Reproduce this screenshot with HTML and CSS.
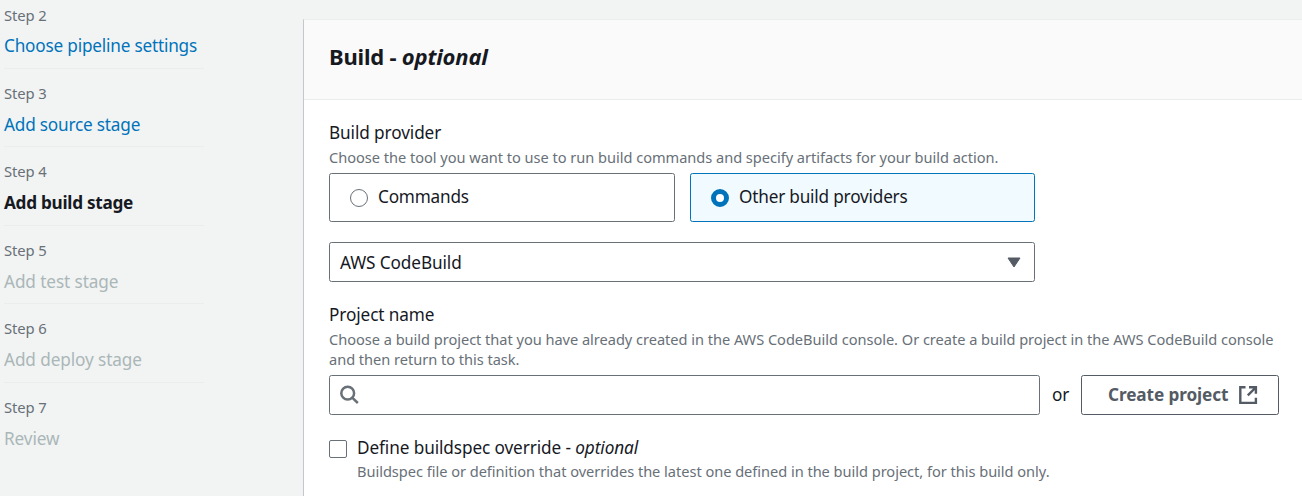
FILE: index.html
```html
<!DOCTYPE html>
<html lang="en">
<head>
<meta charset="utf-8">
<title>Add build stage</title>
<link rel="stylesheet" href="styles.css">
</head>
<body>
<div class="layout">
  <nav class="steps">
    <div class="step"><span class="step-label">Step 2</span><a class="step-title link">Choose pipeline settings</a></div>
    <div class="step"><span class="step-label">Step 3</span><a class="step-title link">Add source stage</a></div>
    <div class="step"><span class="step-label">Step 4</span><span class="step-title active">Add build stage</span></div>
    <div class="step"><span class="step-label">Step 5</span><span class="step-title">Add test stage</span></div>
    <div class="step"><span class="step-label">Step 6</span><span class="step-title">Add deploy stage</span></div>
    <div class="step"><span class="step-label">Step 7</span><span class="step-title">Review</span></div>
  </nav>
  <main class="panel">
    <header class="panel-header"><h2>Build - <em>optional</em></h2></header>
    <div class="panel-body">
      <div class="label">Build provider</div>
      <div class="hint">Choose the tool you want to use to run build commands and specify artifacts for your build action.</div>
      <div class="tiles">
        <div class="tile"><span class="radio"></span><span class="tile-text">Commands</span></div>
        <div class="tile selected"><span class="radio"></span><span class="tile-text">Other build providers</span></div>
      </div>
      <div class="select"><span>AWS CodeBuild</span>
        <svg width="14" height="11" viewBox="0 0 14 11"><path d="M1 1h12L7 10z" fill="#545b64" stroke="#545b64" stroke-width="1" stroke-linejoin="round"/></svg>
      </div>
      <div class="label project">Project name</div>
      <div class="hint project-hint">Choose a build project that you have already created in the AWS CodeBuild console. Or create a build project in the AWS CodeBuild console<br>and then return to this task.</div>
      <div class="search-row">
        <div class="search"><svg width="20" height="20" viewBox="0 0 20 20" fill="none" stroke="#687078" stroke-width="2.5"><circle cx="7.7" cy="8.2" r="6.4"/><path d="M12.2 12.7l5.6 5.3"/></svg></div>
        <span class="or">or</span>
        <div class="button"><span class="button-text">Create project</span>
          <svg width="20" height="20" viewBox="0 0 20 20" fill="none" stroke="#545b64" stroke-width="2.4"><path d="M7.5 2.3H2.3v15.6h15.6v-5.2M11 2.3h6.9v6.5M17.2 3l-7.4 7.4"/></svg>
        </div>
      </div>
      <div class="check-row">
        <span class="checkbox"></span>
        <div>
          <div class="check-label">Define buildspec override - <em>optional</em></div>
          <div class="hint check-hint">Buildspec file or definition that overrides the latest one defined in the build project, for this build only.</div>
        </div>
      </div>
    </div>
  </main>
</div>
</body>
</html>
```
FILE: styles.css
```css
* { box-sizing: border-box; }
body {
  margin: 0;
  height: 496px;
  overflow: hidden;
  background: #f2f3f3;
  color: #16191f;
  font: 17.2px/25px "Noto Sans", "Open Sans", sans-serif;
  letter-spacing: -0.1px;
  white-space: nowrap;
}
.layout { display: flex; height: 496px; }
.steps { width: 303px; padding-left: 4px; flex: none; }
.step {
  width: 200px;
  height: 78.4px;
  padding-top: 14px;
  border-bottom: 1px solid #eaeded;
}
.step:first-child { height: 69px; padding-top: 4.6px; }
.step:last-child { border-bottom: 0; }
.step-label { display: block; font-size: 14.8px; line-height: 20px; color: #687078; }
.step-title { display: block; margin-top: 9px; color: #aab7b8; }
.step:first-child .step-title { margin-top: 8px; }
.link { color: #0073bb; letter-spacing: -0.2px; }
.active { color: #16191f; font-weight: 700; letter-spacing: -0.28px; }
.panel {
  width: 1010px;
  flex: none;
  margin-top: 19px;
  height: 490px;
  border-left: 1px solid #c4c8c9;
  border-top: 1px solid #eaeded;
  background: #fff;
}
.panel-header { height: 80px; padding: 21px 25px; background: #fafafa; border-bottom: 1px solid #eaeded; }
h2 { margin: 0; font-size: 22px; line-height: 30px; letter-spacing: -0.2px; }
.panel-body { padding: 20px 0 0 25px; }
.label { height: 27px; }
.hint { font-size: 14.6px; line-height: 20px; letter-spacing: -0.03px; color: #687078; }
.tiles { display: flex; gap: 15px; margin-top: 6px; }
.tile {
  display: flex;
  gap: 10px;
  width: 346px;
  height: 49px;
  padding: 10px 20px;
  border: 1px solid #687078;
  border-radius: 2.5px;
  letter-spacing: -0.2px;
}
.tile.selected { width: 345px; background: #f1faff; border-color: #0073bb; }
.radio { width: 18px; height: 18px; margin-top: 5px; border: 1.5px solid #687078; border-radius: 50%; background: #fff; }
.selected .radio { border: 5.5px solid #0073bb; }
.select {
  display: flex;
  justify-content: space-between;
  align-items: center;
  width: 706px;
  height: 40px;
  margin-top: 20px;
  padding: 0 13px 0 10px;
  border: 1px solid #687078;
  border-radius: 2.5px;
}
.project { margin-top: 20px; }
.search-row { display: flex; align-items: center; margin-top: 6px; }
.search { width: 711px; height: 40px; padding: 9px 10px; border: 1px solid #687078; border-radius: 2.5px; }
.search svg, .button svg { display: block; }
.or { width: 41px; padding: 0 0 2px 12px; }
.button {
  display: flex;
  justify-content: space-between;
  align-items: center;
  width: 198px;
  height: 40px;
  padding: 0 20px 0 26px;
  border: 1px solid #545b64;
  border-radius: 2.5px;
  color: #545b64;
  font-weight: 700;
}
.button-text { padding-bottom: 2px; }
.check-row { display: flex; gap: 10px; margin-top: 20px; }
.checkbox { width: 18px; height: 18px; margin-top: 5px; border: 1px solid #687078; border-radius: 2px; }
.check-hint { margin-top: 1px; }
```
